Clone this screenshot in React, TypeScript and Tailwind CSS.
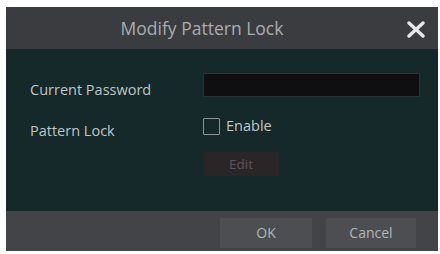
import React from "react";

export default function App() {
  return (
    <div className="w-[440px] h-[254px] bg-white pt-[7px] pl-[6px] pr-[2px] pb-[3px]" style={{ fontFamily: '"Open Sans", "Noto Sans", sans-serif' }}>
      <div className="w-[432px] h-[244px] flex flex-col">
        <div className="relative h-[42px] bg-[#3a3c40] flex items-center justify-center">
          <span className="text-[17.5px] text-[#a9acaf] -ml-[40px]">Modify Pattern Lock</span>
          <svg className="absolute right-[13px] top-[14px]" width="18" height="17" viewBox="0 0 18 17">
            <path d="M2 2 L16 15 M16 2 L2 15" stroke="#e6e7e8" strokeWidth="3.4" strokeLinecap="round" />
          </svg>
        </div>
        <div className="h-[162px] bg-[#15282a] flex flex-col pt-[24px] pl-[24px] pr-[18px]">
          <div className="flex items-center h-[24px]">
            <span className="w-[173px] text-[14.5px] text-[#c2c6c6] mt-[10px]">Current Password</span>
            <div className="flex-1 h-[24px] bg-[#0f0e11] border border-[#2a3334]" />
          </div>
          <div className="flex items-center mt-[20px] h-[18px]">
            <span className="w-[173px] text-[14.5px] text-[#c2c6c6] mt-[10px]">Pattern Lock</span>
            <div className="w-[17px] h-[17px] border border-[#8e9394] rounded-[1px]" />
            <span className="ml-[6px] text-[14.5px] text-[#c2c6c6]">Enable</span>
          </div>
          <div className="mt-[17px] ml-[173px] w-[76px] h-[24px] bg-[#2a2527] flex items-center justify-center text-[13.5px] text-[#5e5557]">Edit</div>
        </div>
        <div className="flex-1 bg-[#434447] flex items-center justify-end gap-[14px] pr-[22px] pt-[3px]">
          <div className="w-[92px] h-[30px] bg-[#4d4e51] flex items-center justify-center text-[14px] text-[#b3b5b7]">OK</div>
          <div className="w-[90px] h-[30px] bg-[#4d4e51] flex items-center justify-center text-[14px] text-[#b3b5b7]">Cancel</div>
        </div>
      </div>
    </div>
  );
}
